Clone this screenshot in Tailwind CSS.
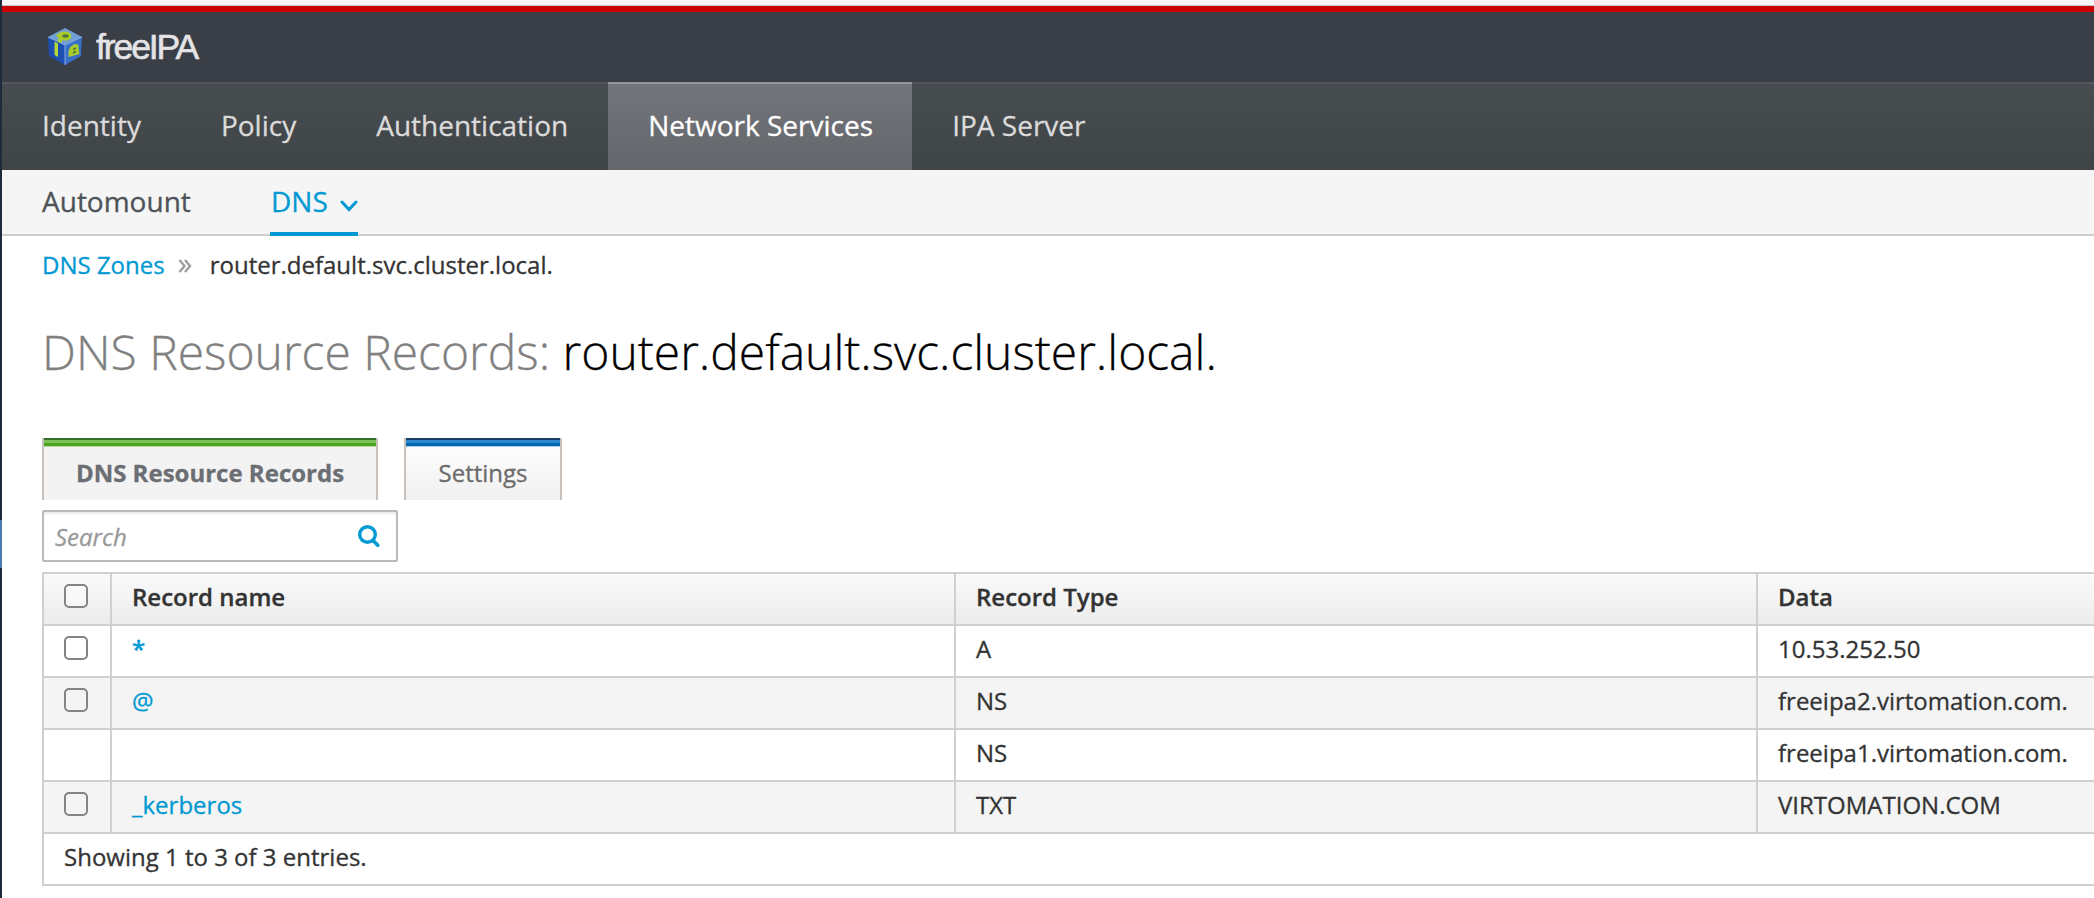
<!DOCTYPE html>
<html lang="en">
<head>
<meta charset="utf-8">
<title>freeIPA</title>
<script src="https://cdn.jsdelivr.net/npm/@tailwindcss/browser@4"></script>
</head>
<body class="h-[898px] w-[2094px] overflow-hidden bg-white font-['Open_Sans',sans-serif] text-[24px] leading-[34px] text-[#333] [-webkit-text-stroke:0.3px]">
<div class="flex h-[898px]">
  <div class="flex w-[2px] shrink-0 flex-col bg-[#1f2a3a]"><div class="mt-[520px] h-[48px] bg-[#4a7ab0]"></div></div>
  <div class="min-w-0 flex-1 overflow-hidden">
    <div class="h-[6px] border-b border-[#c4c8c8] bg-[#f7f7f7]"></div>
    <header class="flex h-[76px] items-start border-t-[6px] border-[#cc0000] bg-[#3a3e46] pl-[44px]">
      <svg class="mt-[15px] h-[40px] w-[38px]" viewBox="0 0 38 40">
        <path d="M19 1 36 10 19 18 2 10Z" fill="#6f9fd6"/>
        <path d="M2 10 19 18V38L3 29Z" fill="#1d4fb0"/>
        <path d="M36 10 19 18V38L35 29Z" fill="#3a6fc8"/>
        <path d="M2 10 19 18 36 10M19 18V38" fill="none" stroke="#86aee6" stroke-width="1"/>
        <path d="M8.500 14.500 12 16.500V30L8.500 28Z" fill="#b6d63a"/>
        <path d="M10 9Q13 4 20 4.500Q27 6 25 11Q22 15 17 13L15 16 11 14 13 11Z" fill="#a9cc2c"/>
        <ellipse cx="19.500" cy="9" rx="3.200" ry="1.700" fill="#4c7434"/>
        <path d="M22.500 30V24Q24 18 30 17Q33 17 32.500 21L33.500 27 28 28.500Z" fill="#a9cc2c"/>
        <path d="M27 22.500 30 21M27 26 30 24.500" stroke="#4c7434" stroke-width="1.400"/>
      </svg>
      <span class="ml-[12px] mt-[15px] font-['Liberation_Sans',sans-serif] text-[35.500px] leading-[40px] tracking-[-2.100px] text-[#e4e4e6] [-webkit-text-stroke:0.6px]">freeIPA</span>
    </header>
    <nav class="flex h-[88px] border-t-2 border-[#53575b] bg-linear-to-b from-[#474c50] to-[#3f4447] text-[28px] leading-[40px] text-[#dbdbdb]">
      <a class="px-[40px] pt-[21px]">Identity</a>
      <a class="px-[40px] pt-[21px]">Policy</a>
      <a class="px-[40px] pt-[21px]">Authentication</a>
      <a class="-mt-[2px] h-[88px] w-[304px] whitespace-nowrap border-t-2 border-[#949799] bg-linear-to-b from-[#72757a] to-[#64666b] pl-[40px] pt-[21px] text-white">Network Services</a>
      <a class="px-[40px] pt-[21px]">IPA Server</a>
    </nav>
    <nav class="flex h-[66px] border-b-2 border-[#cecece] bg-[#f5f5f5] pl-[40px] text-[28px] leading-[40px] text-[#4d5258]">
      <a class="w-[228px] pt-[11px]">Automount</a>
      <a class="flex h-[66px] w-[88px] items-start border-b-4 border-[#0099d3] pl-px pt-[11px] text-[#0099d3]">DNS
        <svg class="ml-[12px] mt-[18px] h-[14px] w-[18px] shrink-0" viewBox="0 0 18 14"><path d="M2 3 9 10.500 16 3" fill="none" stroke="#0099d3" stroke-width="3" stroke-linecap="round"/></svg>
      </a>
    </nav>
    <main class="pl-[40px]">
      <div class="flex h-[62px] pt-[12px]">
        <a class="text-[#0099d3]">DNS Zones</a>
        <svg class="ml-[13px] mt-[11px] h-[14px] w-[14px]" viewBox="0 0 14 14"><path d="M1.500 1 6.500 7 1.500 13M7 1 12 7 7 13" fill="none" stroke="#9c9c9c" stroke-width="2.400"/></svg>
        <span class="ml-[18px]">router.default.svc.cluster.local.</span>
      </div>
      <h1 class="h-[140px] pt-[24px] text-[48px] font-light leading-[60px] text-black"><span class="text-[#808080]">DNS Resource Records:</span> router.default.svc.cluster.local.</h1>
      <div class="flex h-[62px]">
        <div class="w-[336px] border-x-2 border-[#c8c2b8] bg-[#f3f3f3] text-center font-bold text-[#6b6e73]">
          <div class="h-[2px] bg-[#34702a]"></div><div class="h-[3px] bg-[#7cc05a]"></div><div class="h-[3px] bg-[#4ba51e]"></div><div class="h-[1px] bg-[#b8dba6]"></div>
          <div class="pt-[9px]">DNS Resource Records</div>
        </div>
        <div class="ml-[26px] w-[158px] border-x-2 border-[#c8c2b8] bg-linear-to-b from-white to-[#f0f0f0] text-center text-[#6b6b6b]">
          <div class="h-[2px] bg-[#173e66]"></div><div class="h-[3px] bg-[#3088cc]"></div><div class="h-[3px] bg-[#0068b3]"></div><div class="h-[1px] bg-[#a6cbe6]"></div>
          <div class="pt-[9px]">Settings</div>
        </div>
      </div>
      <div class="mt-[10px] flex h-[52px] w-[356px] justify-between rounded-[2px] border-2 border-[#bababa] bg-white pl-[11px] pr-[15px] shadow-[inset_0_2px_2px_rgba(0,0,0,0.075)]">
        <span class="pt-[8px] italic text-[#999]">Search</span>
        <svg class="mt-[12px] h-[24px] w-[24px]" viewBox="0 0 24 24"><circle cx="10.500" cy="10.500" r="7.800" fill="none" stroke="#0099d3" stroke-width="3.400"/><path d="M16 16.500 20.800 21.300" stroke="#0099d3" stroke-width="3.600" stroke-linecap="round"/></svg>
      </div>
      <table class="mt-[10px] w-[2100px] table-fixed border-separate border-spacing-0 border-l-2 border-t-2 border-[#d0d0d0] text-left [&_td]:border-b-2 [&_td]:border-r-2 [&_td]:border-[#d0d0d0] [&_td]:p-0 [&_td]:pl-[20px] [&_td]:pt-[6px] [&_td]:align-top [&_th]:border-b-2 [&_th]:border-r-2 [&_th]:border-[#d0d0d0] [&_th]:bg-linear-to-b [&_th]:from-[#fafafa] [&_th]:to-[#ececec] [&_th]:p-0 [&_th]:pl-[20px] [&_th]:pt-[6px] [&_th]:align-top [&_th]:font-semibold">
        <colgroup><col class="w-[68px]"><col class="w-[844px]"><col class="w-[802px]"><col></colgroup>
        <thead>
          <tr class="h-[52px]"><th><div class="mt-[4px] h-[24px] w-[24px] rounded-[5px] border-2 border-[#848484] bg-white/40"></div></th><th>Record name</th><th>Record Type</th><th>Data</th></tr>
        </thead>
        <tbody>
          <tr class="h-[52px]"><td><div class="mt-[4px] h-[24px] w-[24px] rounded-[5px] border-2 border-[#848484]"></div></td><td class="font-semibold text-[#0099d3]">*</td><td>A</td><td>10.53.252.50</td></tr>
          <tr class="h-[52px] bg-[#f4f4f4]"><td><div class="mt-[4px] h-[24px] w-[24px] rounded-[5px] border-2 border-[#848484]"></div></td><td class="text-[#0099d3]">@</td><td>NS</td><td>freeipa2.virtomation.com.</td></tr>
          <tr class="h-[52px]"><td></td><td></td><td>NS</td><td>freeipa1.virtomation.com.</td></tr>
          <tr class="h-[52px] bg-[#f4f4f4]"><td><div class="mt-[4px] h-[24px] w-[24px] rounded-[5px] border-2 border-[#848484]"></div></td><td class="text-[#0099d3]">_kerberos</td><td>TXT</td><td>VIRTOMATION.COM</td></tr>
        </tbody>
        <tfoot>
          <tr class="h-[52px]"><td colspan="4">Showing 1 to 3 of 3 entries.</td></tr>
        </tfoot>
      </table>
    </main>
  </div>
</div>
</body>
</html>
